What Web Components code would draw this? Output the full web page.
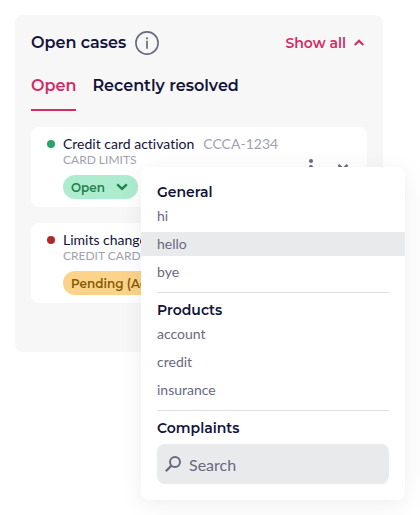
<!DOCTYPE html>
<html lang="en">
<head>
<meta charset="utf-8">
<meta name="viewport" content="width=device-width, initial-scale=1">
<title>Open cases</title>
<style>
  :root {
    --ink: #13133a;
    --muted: #696981;
    --faint: #a1a1b0;
    --accent: #d22b66;
    --grey: #e9eaec;
    --font-head: Montserrat, Inter, sans-serif;
  }

  body {
    box-sizing: border-box;
    min-height: 100vh;
    margin: 0;
    padding: 15px 37px 15px 15px;
    background: #fff;
    color: var(--ink);
    font-family: Lato, sans-serif;
    font-size: 14px;
    font-variant-ligatures: none;
  }
</style>
</head>
<body>

<case-panel heading="Open cases">
  <case-tab slot="tabs" active>Open</case-tab>
  <case-tab slot="tabs">Recently resolved</case-tab>

  <case-card name="Credit card activation" number="CCCA-1234" category="CARD LIMITS" color="#26a567">
    <case-status slot="status" value="Open"></case-status>
    <case-menu slot="menu">
      <menu-section heading="General">
        <menu-option>hi</menu-option>
        <menu-option active>hello</menu-option>
        <menu-option>bye</menu-option>
      </menu-section>
      <menu-section heading="Products">
        <menu-option>account</menu-option>
        <menu-option>credit</menu-option>
        <menu-option>insurance</menu-option>
      </menu-section>
      <menu-section heading="Complaints">
        <menu-search></menu-search>
      </menu-section>
    </case-menu>
  </case-card>

  <case-card name="Limits change" category="CREDIT CARD" color="#b02a2a">
    <case-status slot="status" type="pending" value="Pending (Action)"></case-status>
  </case-card>
</case-panel>

<script>
const resetButton = `
  button {
    margin: 0;
    padding: 0;
    border: 0;
    background: none;
    color: inherit;
    font: inherit;
    cursor: pointer;
  }
`;

class CasePanel extends HTMLElement {
  constructor() {
    super();
    this.attachShadow({ mode: 'open' });
    this.shadowRoot.innerHTML = `
      <style>
        ${resetButton}

        :host {
          display: block;
          padding: 16px 16px 49px;
          border-radius: 8px;
          background: #f7f7f7;
        }

        header {
          display: flex;
          align-items: center;
          height: 24px;
          margin-bottom: 16px;
          font-family: var(--font-head);
        }

        h1 {
          margin: 0 9px 0 0;
          font-size: 16px;
          font-weight: 600;
          line-height: 26px;
        }

        svg {
          display: block;
          fill: none;
          stroke: currentColor;
        }

        .info {
          color: var(--muted);
        }

        .toggle {
          display: flex;
          align-items: center;
          gap: 8px;
          margin-left: auto;
          padding-right: 3px;
          color: var(--accent);
          font-size: 14px;
          font-weight: 600;
        }

        nav {
          display: flex;
          gap: 16px;
        }

        .cards {
          display: flex;
          flex-direction: column;
          gap: 16px;
          margin-top: 16px;
        }
      </style>
      <header>
        <h1></h1>
        <button class="info" aria-label="Information">
          <svg width="24" height="24" viewBox="0 0 24 24">
            <circle cx="12" cy="12" r="11.1" stroke-width="1.6"/>
            <path d="M12 9.8v8" stroke-width="1.7"/>
            <circle cx="12" cy="7.3" r="1.1" fill="currentColor" stroke="none"/>
          </svg>
        </button>
        <button class="toggle">
          <span>Show all</span>
          <svg width="10" height="8" viewBox="0 0 10 8">
            <path d="M.7 6 5 1.8 9.3 6" stroke-width="2.2"/>
          </svg>
        </button>
      </header>
      <nav><slot name="tabs"></slot></nav>
      <div class="cards"><slot></slot></div>
    `;
    this.shadowRoot.querySelector('h1').textContent = this.getAttribute('heading');
  }
}

class CaseTab extends HTMLElement {
  constructor() {
    super();
    this.attachShadow({ mode: 'open' });
    this.shadowRoot.innerHTML = `
      <style>
        ${resetButton}

        :host {
          display: block;
          font-family: var(--font-head);
        }

        button {
          display: block;
          padding: 4px 0 12px;
          border-bottom: 2px solid transparent;
          font-size: 16px;
          font-weight: 600;
          line-height: 22px;
        }

        :host([active]) button {
          border-color: var(--accent);
          color: var(--accent);
        }
      </style>
      <button><slot></slot></button>
    `;
  }
}

class CaseCard extends HTMLElement {
  constructor() {
    super();
    this.attachShadow({ mode: 'open' });
    this.shadowRoot.innerHTML = `
      <style>
        ${resetButton}

        :host {
          display: flex;
          gap: 8px;
          position: relative;
          padding: 8px 12px 8px 16px;
          border-radius: 8px;
          background: #fff;
        }

        .dot {
          flex: none;
          width: 8px;
          height: 8px;
          margin-top: 5px;
          border-radius: 50%;
        }

        .body {
          flex: 1;
          min-width: 0;
        }

        .title {
          display: flex;
          gap: 9px;
          line-height: 18px;
          white-space: nowrap;
        }

        h2 {
          margin: 0;
          font: inherit;
        }

        .number,
        .category {
          color: var(--faint);
        }

        .category {
          margin-bottom: 8px;
          font-size: 12px;
          line-height: 14px;
        }

        .actions {
          display: flex;
          align-self: center;
          gap: 8px;
          color: var(--muted);
        }

        svg {
          display: block;
          fill: none;
          stroke: currentColor;
        }
      </style>
      <span class="dot"></span>
      <div class="body">
        <div class="title"><h2></h2><span class="number"></span></div>
        <div class="category"></div>
        <slot name="status"></slot>
      </div>
      <div class="actions">
        <button aria-label="More">
          <svg width="24" height="24" viewBox="0 0 24 24">
            <g fill="currentColor" stroke="none">
              <circle cx="12" cy="6" r="2"/>
              <circle cx="12" cy="12" r="2"/>
              <circle cx="12" cy="18" r="2"/>
            </g>
          </svg>
        </button>
        <button aria-label="Expand">
          <svg width="24" height="24" viewBox="0 0 24 24">
            <path d="m7.5 10 4.5 4.2 4.5-4.2" stroke-width="2.4"/>
          </svg>
        </button>
      </div>
      <slot name="menu"></slot>
    `;
    this.shadowRoot.querySelector('.dot').style.background = this.getAttribute('color');
    this.shadowRoot.querySelector('h2').textContent = this.getAttribute('name');
    this.shadowRoot.querySelector('.number').textContent = this.getAttribute('number') || '';
    this.shadowRoot.querySelector('.category').textContent = this.getAttribute('category');
  }
}

class CaseStatus extends HTMLElement {
  constructor() {
    super();
    this.attachShadow({ mode: 'open' });
    this.shadowRoot.innerHTML = `
      <style>
        :host {
          display: grid;
          width: max-content;
          align-items: center;
          border-radius: 12px;
          background: #aeeccf;
          color: #23804f;
        }

        :host([type="pending"]) {
          background: #fcd38b;
          color: #8a5a00;
        }

        select,
        svg {
          grid-area: 1 / 1;
        }

        select {
          height: 24px;
          margin: 0;
          padding: 0 32px 0 8px;
          border: 0;
          background: none;
          color: inherit;
          font: 600 12px var(--font-head);
          appearance: none;
        }

        svg {
          justify-self: end;
          margin-right: 10px;
          fill: none;
          stroke: currentColor;
          pointer-events: none;
        }
      </style>
      <select aria-label="Status"><option></option></select>
      <svg width="12" height="8" viewBox="0 0 12 8">
        <path d="m1.2 1.4 4.8 4.4 4.8-4.4" stroke-width="2.4"/>
      </svg>
    `;
    this.shadowRoot.querySelector('option').textContent = this.getAttribute('value');
  }
}

class CaseMenu extends HTMLElement {
  constructor() {
    super();
    this.attachShadow({ mode: 'open' });
    /* hangs from the middle of its card and sticks out on the right */
    this.shadowRoot.innerHTML = `
      <style>
        :host {
          display: block;
          position: absolute;
          z-index: 1;
          top: 50%;
          right: -38px;
          box-sizing: border-box;
          width: 264px;
          padding: 8px 0;
          border-radius: 8px;
          background: #fff;
          box-shadow: 0 4px 24px rgba(0, 0, 0, .07);
        }
      </style>
      <slot></slot>
    `;
  }
}

class MenuSection extends HTMLElement {
  constructor() {
    super();
    this.attachShadow({ mode: 'open' });
    this.shadowRoot.innerHTML = `
      <style>
        :host {
          display: block;
        }

        :host(:not(:first-child))::before {
          content: "";
          display: block;
          margin: 0 16px;
          border-top: 1px solid #dedee1;
        }

        section {
          padding: 5px 0 8px;
        }

        h3 {
          margin: 0 16px;
          font: 600 14px/24px var(--font-head);
        }

        .items {
          display: flex;
          flex-direction: column;
          gap: 4px;
        }
      </style>
      <section>
        <h3></h3>
        <div class="items"><slot></slot></div>
      </section>
    `;
    this.shadowRoot.querySelector('h3').textContent = this.getAttribute('heading');
  }
}

class MenuOption extends HTMLElement {
  constructor() {
    super();
    this.attachShadow({ mode: 'open' });
    this.shadowRoot.innerHTML = `
      <style>
        ${resetButton}

        :host {
          display: block;
          color: var(--muted);
        }

        button {
          display: block;
          width: 100%;
          padding: 0 16px;
          line-height: 24px;
          text-align: left;
        }

        button:hover,
        :host([active]) button {
          background: var(--grey);
        }
      </style>
      <button><slot></slot></button>
    `;
  }
}

class MenuSearch extends HTMLElement {
  constructor() {
    super();
    this.attachShadow({ mode: 'open' });
    this.shadowRoot.innerHTML = `
      <style>
        :host {
          display: block;
          margin: 4px 16px 0;
        }

        label {
          display: flex;
          align-items: center;
          gap: 8px;
          height: 40px;
          padding: 0 8px;
          border-radius: 8px;
          background: var(--grey);
          color: var(--muted);
        }

        svg {
          flex: none;
          fill: none;
          stroke: currentColor;
        }

        input {
          flex: 1;
          min-width: 0;
          padding: 0;
          border: 0;
          outline: 0;
          background: none;
          color: inherit;
          font-family: inherit;
          font-size: 16px;
        }

        input::placeholder {
          color: inherit;
          opacity: 1;
        }
      </style>
      <label>
        <svg width="16" height="16" viewBox="0 0 16 16">
          <circle cx="10" cy="6" r="5" stroke-width="2"/>
          <path d="M6.4 9.6.8 15.2" stroke-width="2.2"/>
        </svg>
        <input type="search" placeholder="Search" aria-label="Search">
      </label>
    `;
  }
}

customElements.define('case-panel', CasePanel);
customElements.define('case-tab', CaseTab);
customElements.define('case-card', CaseCard);
customElements.define('case-status', CaseStatus);
customElements.define('case-menu', CaseMenu);
customElements.define('menu-section', MenuSection);
customElements.define('menu-option', MenuOption);
customElements.define('menu-search', MenuSearch);
</script>
</body>
</html>
